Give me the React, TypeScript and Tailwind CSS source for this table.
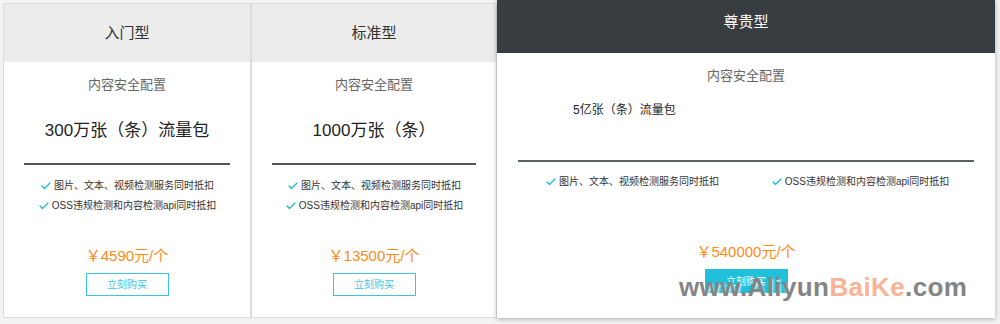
import React from 'react';
import { Check } from 'lucide-react';

const Feature: React.FC<{ text: string }> = ({ text }) => (
  <div className="flex items-center justify-center gap-[2px] text-[10px] leading-[20px] text-[#333]">
    <Check size={12} strokeWidth={2.5} className="text-[#1cb8d8]" />
    <span>{text}</span>
  </div>
);

const features = ['图片、文本、视频检测服务同时抵扣', 'OSS违规检测和内容检测api同时抵扣'];

const SmallCard: React.FC<{ title: string; amount: string; price: string; className?: string }> = ({
  title,
  amount,
  price,
  className,
}) => (
  <div className={`mt-[3px] flex h-[315px] flex-col border border-[#dcdcdc] bg-white ${className ?? ''}`}>
    <div className="flex h-[58px] items-center justify-center bg-[#ebeceb] text-[15px] text-[#333]">{title}</div>
    <div className="mt-[13px] text-center text-[13px] leading-[20px] text-[#666]">内容安全配置</div>
    <div className="mt-[24px] text-center text-[17px] leading-[24px] text-[#222]">{amount}</div>
    <div className="mx-[20px] mt-[20px] h-[2px] bg-[#555]" />
    <div className="mt-[11px] flex flex-col">
      {features.map((f) => (
        <Feature key={f} text={f} />
      ))}
    </div>
    <div className="mt-[30px] text-center text-[15px] leading-[20px] text-[#ff8a1a]">{price}</div>
    <div className="mt-[7px] flex justify-center">
      <button className="h-[23px] w-[83px] border border-[#3bc6e0] text-[10px] text-[#3bc6e0]">立刻购买</button>
    </div>
  </div>
);

export default function App() {
  return (
    <div
      className="flex h-[324px] w-[1000px] items-start bg-[#f3f3f3] pl-[3px]"
      style={{ fontFamily: '"Liberation Sans", "Noto Sans CJK SC", sans-serif' }}
    >
      <SmallCard title="入门型" amount="300万张（条）流量包" price="￥4590元/个" className="w-[248px]" />
      <SmallCard title="标准型" amount="1000万张（条）" price="￥13500元/个" className="-ml-px w-[247px] border-l-2" />
      <div className="relative flex h-[318px] w-[498px] flex-col bg-white shadow-[0_1px_5px_rgba(0,0,0,0.3)]">
        <div className="flex h-[53px] justify-center bg-[#373d41] pt-[11px] text-[15px] text-white">尊贵型</div>
        <div className="mt-[13px] text-center text-[13px] leading-[20px] text-[#666]">内容安全配置</div>
        <div className="mt-[16px] pl-[76px] text-[12px] leading-[16px] text-[#222]">5亿张（条）流量包</div>
        <div className="mx-[21px] mt-[42px] h-[2px] bg-[#5b6163]" />
        <div className="mx-[21px] mt-[10px] grid grid-cols-2">
          {features.map((f) => (
            <Feature key={f} text={f} />
          ))}
        </div>
        <div className="mt-[50px] text-center text-[15px] leading-[20px] text-[#ff8a1a]">￥540000元/个</div>
        <div className="mt-[7px] flex justify-center">
          <button className="h-[24px] w-[83px] bg-[#22bfdb] text-[10px] text-white">立刻购买</button>
        </div>
        <div
          className="absolute left-[182px] top-[272px] text-[26px] font-bold leading-[30px] tracking-[0.4px] text-[#858585] [text-shadow:1px_2px_2px_rgba(255,255,255,0.9)]"
          style={{ fontFamily: '"Liberation Sans", Arial, sans-serif' }}
        >
          www.Aliyun<span className="text-[#f9b396]">BaiKe</span>.com
        </div>
      </div>
    </div>
  );
}
